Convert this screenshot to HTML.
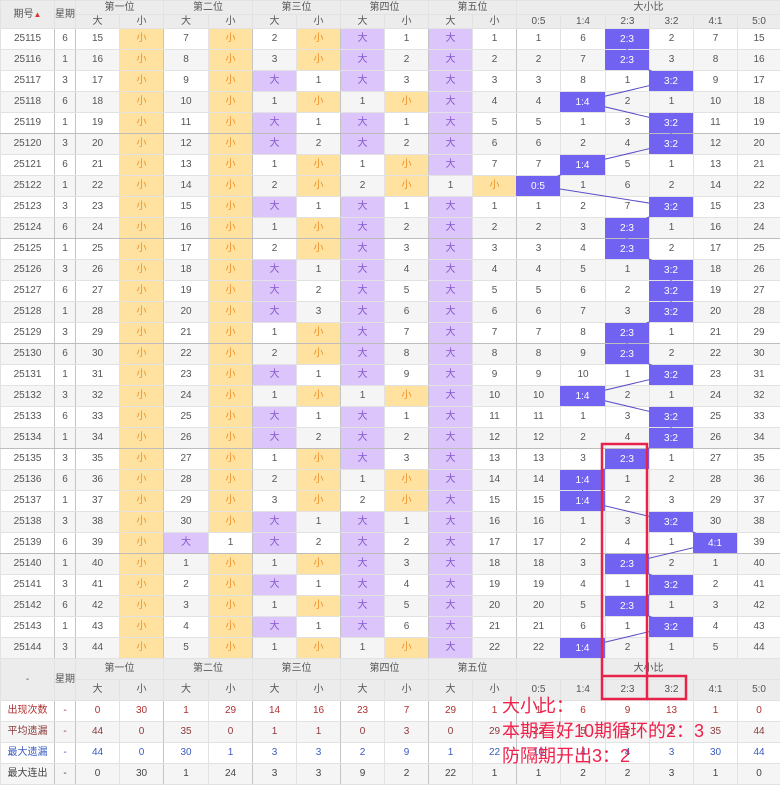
<!DOCTYPE html>
<html><head><meta charset="utf-8"><style>
body{margin:0;width:780px;height:785px;overflow:hidden;background:#fff;font-family:"Liberation Sans","Noto Sans CJK SC",sans-serif;position:relative}
table{border-collapse:collapse;table-layout:fixed;width:780px;position:absolute;left:0;font-size:10px;color:#555;line-height:12px}
td,th{border:1px solid #e2e2e2;text-align:center;padding:0;overflow:hidden;white-space:nowrap;font-weight:normal;line-height:12px;vertical-align:middle}
thead th,.fh th{background:#ececec;color:#555}
thead tr{height:14px}
thead th{height:13px}
tbody tr{height:21px}
tbody td{height:20px}
tbody tr:nth-child(even) td{background:#f5f5f5}
tbody td.s{background:#ffe29f!important;color:#f0902a}
tbody td.b{background:#dcc5fb!important;color:#8656d0}
tr.g td{border-bottom:1px solid #bdbdbd}
td:nth-child(1),td:nth-child(2),td:nth-child(4),td:nth-child(6),td:nth-child(8),td:nth-child(10),td:nth-child(12){border-right:1px solid #c4c4c4}
.f tr{height:21px}
.f td{height:20px}
.r1 td{color:#b03030}.r2 td{color:#8b3a3a}.r3 td{color:#3a5cc0}.r4 td{color:#444}
svg{position:absolute;left:0;top:0}
.note{position:absolute;left:502px;color:#f0204a;font-size:18px;font-family:"Liberation Sans","Noto Sans CJK SC",sans-serif;line-height:22px}
</style></head><body>
<table style="top:0">
<colgroup><col style="width:54px"><col style="width:21px"><col style="width:44px"><col style="width:44px"><col style="width:45px"><col style="width:44px"><col style="width:44px"><col style="width:44px"><col style="width:44px"><col style="width:44px"><col style="width:44px"><col style="width:44px"><col style="width:44px"><col style="width:45px"><col style="width:44px"><col style="width:44px"><col style="width:44px"><col style="width:43px"></colgroup>
<thead>
<tr><th rowspan="2">期号<span style="color:#d33;font-size:8px">▲</span></th><th rowspan="2">星期</th><th colspan="2">第一位</th><th colspan="2">第二位</th><th colspan="2">第三位</th><th colspan="2">第四位</th><th colspan="2">第五位</th><th colspan="6">大小比</th></tr>
<tr><th>大</th><th>小</th><th>大</th><th>小</th><th>大</th><th>小</th><th>大</th><th>小</th><th>大</th><th>小</th><th>0:5</th><th>1:4</th><th>2:3</th><th>3:2</th><th>4:1</th><th>5:0</th></tr>
</thead>
<tbody>
<tr><td>25115</td><td>6</td><td>15</td><td class="s">小</td><td>7</td><td class="s">小</td><td>2</td><td class="s">小</td><td class="b">大</td><td>1</td><td class="b">大</td><td>1</td><td>1</td><td>6</td><td></td><td>2</td><td>7</td><td>15</td></tr>
<tr><td>25116</td><td>1</td><td>16</td><td class="s">小</td><td>8</td><td class="s">小</td><td>3</td><td class="s">小</td><td class="b">大</td><td>2</td><td class="b">大</td><td>2</td><td>2</td><td>7</td><td></td><td>3</td><td>8</td><td>16</td></tr>
<tr><td>25117</td><td>3</td><td>17</td><td class="s">小</td><td>9</td><td class="s">小</td><td class="b">大</td><td>1</td><td class="b">大</td><td>3</td><td class="b">大</td><td>3</td><td>3</td><td>8</td><td>1</td><td></td><td>9</td><td>17</td></tr>
<tr><td>25118</td><td>6</td><td>18</td><td class="s">小</td><td>10</td><td class="s">小</td><td>1</td><td class="s">小</td><td>1</td><td class="s">小</td><td class="b">大</td><td>4</td><td>4</td><td></td><td>2</td><td>1</td><td>10</td><td>18</td></tr>
<tr class="g"><td>25119</td><td>1</td><td>19</td><td class="s">小</td><td>11</td><td class="s">小</td><td class="b">大</td><td>1</td><td class="b">大</td><td>1</td><td class="b">大</td><td>5</td><td>5</td><td>1</td><td>3</td><td></td><td>11</td><td>19</td></tr>
<tr><td>25120</td><td>3</td><td>20</td><td class="s">小</td><td>12</td><td class="s">小</td><td class="b">大</td><td>2</td><td class="b">大</td><td>2</td><td class="b">大</td><td>6</td><td>6</td><td>2</td><td>4</td><td></td><td>12</td><td>20</td></tr>
<tr><td>25121</td><td>6</td><td>21</td><td class="s">小</td><td>13</td><td class="s">小</td><td>1</td><td class="s">小</td><td>1</td><td class="s">小</td><td class="b">大</td><td>7</td><td>7</td><td></td><td>5</td><td>1</td><td>13</td><td>21</td></tr>
<tr><td>25122</td><td>1</td><td>22</td><td class="s">小</td><td>14</td><td class="s">小</td><td>2</td><td class="s">小</td><td>2</td><td class="s">小</td><td>1</td><td class="s">小</td><td></td><td>1</td><td>6</td><td>2</td><td>14</td><td>22</td></tr>
<tr><td>25123</td><td>3</td><td>23</td><td class="s">小</td><td>15</td><td class="s">小</td><td class="b">大</td><td>1</td><td class="b">大</td><td>1</td><td class="b">大</td><td>1</td><td>1</td><td>2</td><td>7</td><td></td><td>15</td><td>23</td></tr>
<tr class="g"><td>25124</td><td>6</td><td>24</td><td class="s">小</td><td>16</td><td class="s">小</td><td>1</td><td class="s">小</td><td class="b">大</td><td>2</td><td class="b">大</td><td>2</td><td>2</td><td>3</td><td></td><td>1</td><td>16</td><td>24</td></tr>
<tr><td>25125</td><td>1</td><td>25</td><td class="s">小</td><td>17</td><td class="s">小</td><td>2</td><td class="s">小</td><td class="b">大</td><td>3</td><td class="b">大</td><td>3</td><td>3</td><td>4</td><td></td><td>2</td><td>17</td><td>25</td></tr>
<tr><td>25126</td><td>3</td><td>26</td><td class="s">小</td><td>18</td><td class="s">小</td><td class="b">大</td><td>1</td><td class="b">大</td><td>4</td><td class="b">大</td><td>4</td><td>4</td><td>5</td><td>1</td><td></td><td>18</td><td>26</td></tr>
<tr><td>25127</td><td>6</td><td>27</td><td class="s">小</td><td>19</td><td class="s">小</td><td class="b">大</td><td>2</td><td class="b">大</td><td>5</td><td class="b">大</td><td>5</td><td>5</td><td>6</td><td>2</td><td></td><td>19</td><td>27</td></tr>
<tr><td>25128</td><td>1</td><td>28</td><td class="s">小</td><td>20</td><td class="s">小</td><td class="b">大</td><td>3</td><td class="b">大</td><td>6</td><td class="b">大</td><td>6</td><td>6</td><td>7</td><td>3</td><td></td><td>20</td><td>28</td></tr>
<tr class="g"><td>25129</td><td>3</td><td>29</td><td class="s">小</td><td>21</td><td class="s">小</td><td>1</td><td class="s">小</td><td class="b">大</td><td>7</td><td class="b">大</td><td>7</td><td>7</td><td>8</td><td></td><td>1</td><td>21</td><td>29</td></tr>
<tr><td>25130</td><td>6</td><td>30</td><td class="s">小</td><td>22</td><td class="s">小</td><td>2</td><td class="s">小</td><td class="b">大</td><td>8</td><td class="b">大</td><td>8</td><td>8</td><td>9</td><td></td><td>2</td><td>22</td><td>30</td></tr>
<tr><td>25131</td><td>1</td><td>31</td><td class="s">小</td><td>23</td><td class="s">小</td><td class="b">大</td><td>1</td><td class="b">大</td><td>9</td><td class="b">大</td><td>9</td><td>9</td><td>10</td><td>1</td><td></td><td>23</td><td>31</td></tr>
<tr><td>25132</td><td>3</td><td>32</td><td class="s">小</td><td>24</td><td class="s">小</td><td>1</td><td class="s">小</td><td>1</td><td class="s">小</td><td class="b">大</td><td>10</td><td>10</td><td></td><td>2</td><td>1</td><td>24</td><td>32</td></tr>
<tr><td>25133</td><td>6</td><td>33</td><td class="s">小</td><td>25</td><td class="s">小</td><td class="b">大</td><td>1</td><td class="b">大</td><td>1</td><td class="b">大</td><td>11</td><td>11</td><td>1</td><td>3</td><td></td><td>25</td><td>33</td></tr>
<tr class="g"><td>25134</td><td>1</td><td>34</td><td class="s">小</td><td>26</td><td class="s">小</td><td class="b">大</td><td>2</td><td class="b">大</td><td>2</td><td class="b">大</td><td>12</td><td>12</td><td>2</td><td>4</td><td></td><td>26</td><td>34</td></tr>
<tr><td>25135</td><td>3</td><td>35</td><td class="s">小</td><td>27</td><td class="s">小</td><td>1</td><td class="s">小</td><td class="b">大</td><td>3</td><td class="b">大</td><td>13</td><td>13</td><td>3</td><td></td><td>1</td><td>27</td><td>35</td></tr>
<tr><td>25136</td><td>6</td><td>36</td><td class="s">小</td><td>28</td><td class="s">小</td><td>2</td><td class="s">小</td><td>1</td><td class="s">小</td><td class="b">大</td><td>14</td><td>14</td><td></td><td>1</td><td>2</td><td>28</td><td>36</td></tr>
<tr><td>25137</td><td>1</td><td>37</td><td class="s">小</td><td>29</td><td class="s">小</td><td>3</td><td class="s">小</td><td>2</td><td class="s">小</td><td class="b">大</td><td>15</td><td>15</td><td></td><td>2</td><td>3</td><td>29</td><td>37</td></tr>
<tr><td>25138</td><td>3</td><td>38</td><td class="s">小</td><td>30</td><td class="s">小</td><td class="b">大</td><td>1</td><td class="b">大</td><td>1</td><td class="b">大</td><td>16</td><td>16</td><td>1</td><td>3</td><td></td><td>30</td><td>38</td></tr>
<tr class="g"><td>25139</td><td>6</td><td>39</td><td class="s">小</td><td class="b">大</td><td>1</td><td class="b">大</td><td>2</td><td class="b">大</td><td>2</td><td class="b">大</td><td>17</td><td>17</td><td>2</td><td>4</td><td>1</td><td></td><td>39</td></tr>
<tr><td>25140</td><td>1</td><td>40</td><td class="s">小</td><td>1</td><td class="s">小</td><td>1</td><td class="s">小</td><td class="b">大</td><td>3</td><td class="b">大</td><td>18</td><td>18</td><td>3</td><td></td><td>2</td><td>1</td><td>40</td></tr>
<tr><td>25141</td><td>3</td><td>41</td><td class="s">小</td><td>2</td><td class="s">小</td><td class="b">大</td><td>1</td><td class="b">大</td><td>4</td><td class="b">大</td><td>19</td><td>19</td><td>4</td><td>1</td><td></td><td>2</td><td>41</td></tr>
<tr><td>25142</td><td>6</td><td>42</td><td class="s">小</td><td>3</td><td class="s">小</td><td>1</td><td class="s">小</td><td class="b">大</td><td>5</td><td class="b">大</td><td>20</td><td>20</td><td>5</td><td></td><td>1</td><td>3</td><td>42</td></tr>
<tr><td>25143</td><td>1</td><td>43</td><td class="s">小</td><td>4</td><td class="s">小</td><td class="b">大</td><td>1</td><td class="b">大</td><td>6</td><td class="b">大</td><td>21</td><td>21</td><td>6</td><td>1</td><td></td><td>4</td><td>43</td></tr>
<tr class="g"><td>25144</td><td>3</td><td>44</td><td class="s">小</td><td>5</td><td class="s">小</td><td>1</td><td class="s">小</td><td>1</td><td class="s">小</td><td class="b">大</td><td>22</td><td>22</td><td></td><td>2</td><td>1</td><td>5</td><td>44</td></tr>
</tbody>
</table>

<table style="top:658px" class="f">
<colgroup><col style="width:54px"><col style="width:21px"><col style="width:44px"><col style="width:44px"><col style="width:45px"><col style="width:44px"><col style="width:44px"><col style="width:44px"><col style="width:44px"><col style="width:44px"><col style="width:44px"><col style="width:44px"><col style="width:44px"><col style="width:45px"><col style="width:44px"><col style="width:44px"><col style="width:44px"><col style="width:43px"></colgroup>
<tr class="fh"><th rowspan="2">-</th><th rowspan="2">星期</th><th colspan="2">第一位</th><th colspan="2">第二位</th><th colspan="2">第三位</th><th colspan="2">第四位</th><th colspan="2">第五位</th><th colspan="6">大小比</th></tr>
<tr class="fh"><th>大</th><th>小</th><th>大</th><th>小</th><th>大</th><th>小</th><th>大</th><th>小</th><th>大</th><th>小</th><th>0:5</th><th>1:4</th><th>2:3</th><th>3:2</th><th>4:1</th><th>5:0</th></tr>
<tr class="r1" style="background:#fff"><td>出现次数</td><td>-</td><td>0</td><td>30</td><td>1</td><td>29</td><td>14</td><td>16</td><td>23</td><td>7</td><td>29</td><td>1</td><td>1</td><td>6</td><td>9</td><td>13</td><td>1</td><td>0</td></tr>
<tr class="r2" style="background:#f5f5f5"><td>平均遗漏</td><td>-</td><td>44</td><td>0</td><td>35</td><td>0</td><td>1</td><td>1</td><td>0</td><td>3</td><td>0</td><td>29</td><td>22</td><td>5</td><td>2</td><td>1</td><td>35</td><td>44</td></tr>
<tr class="r3" style="background:#fff"><td>最大遗漏</td><td>-</td><td>44</td><td>0</td><td>30</td><td>1</td><td>3</td><td>3</td><td>2</td><td>9</td><td>1</td><td>22</td><td>10</td><td>4</td><td>4</td><td>3</td><td>30</td><td>44</td></tr>
<tr class="r4" style="background:#f5f5f5"><td>最大连出</td><td>-</td><td>0</td><td>30</td><td>1</td><td>24</td><td>3</td><td>3</td><td>9</td><td>2</td><td>22</td><td>1</td><td>1</td><td>2</td><td>2</td><td>3</td><td>1</td><td>0</td></tr>
</table>

<svg width="780" height="785" xmlns="http://www.w3.org/2000/svg" font-family="Liberation Sans, sans-serif" font-size="10">
<polyline fill="none" stroke="#5a4fc8" stroke-width="1" points="627,38.5 627,59.5 671,80.5 582.5,101.5 671,122.5 671,143.5 582.5,164.5 538,185.5 671,206.5 627,227.5 627,248.5 671,269.5 671,290.5 671,311.5 627,332.5 627,353.5 671,374.5 582.5,395.5 671,416.5 671,437.5 627,458.5 582.5,479.5 582.5,500.5 671,521.5 715,542.5 627,563.5 671,584.5 627,605.5 671,626.5 582.5,647.5"/>
<g fill="#7262f2">
<rect x="605" y="29" width="44" height="20"/><rect x="605" y="50" width="44" height="20"/><rect x="649" y="71" width="44" height="20"/><rect x="560" y="92" width="45" height="20"/><rect x="649" y="113" width="44" height="20"/><rect x="649" y="134" width="44" height="20"/><rect x="560" y="155" width="45" height="20"/><rect x="516" y="176" width="44" height="20"/><rect x="649" y="197" width="44" height="20"/><rect x="605" y="218" width="44" height="20"/><rect x="605" y="239" width="44" height="20"/><rect x="649" y="260" width="44" height="20"/><rect x="649" y="281" width="44" height="20"/><rect x="649" y="302" width="44" height="20"/><rect x="605" y="323" width="44" height="20"/><rect x="605" y="344" width="44" height="20"/><rect x="649" y="365" width="44" height="20"/><rect x="560" y="386" width="45" height="20"/><rect x="649" y="407" width="44" height="20"/><rect x="649" y="428" width="44" height="20"/><rect x="605" y="449" width="44" height="20"/><rect x="560" y="470" width="45" height="20"/><rect x="560" y="491" width="45" height="20"/><rect x="649" y="512" width="44" height="20"/><rect x="693" y="533" width="44" height="20"/><rect x="605" y="554" width="44" height="20"/><rect x="649" y="575" width="44" height="20"/><rect x="605" y="596" width="44" height="20"/><rect x="649" y="617" width="44" height="20"/><rect x="560" y="638" width="45" height="20"/>
</g>
<g fill="#fff" text-anchor="middle">
<text x="627" y="42">2:3</text><text x="627" y="63">2:3</text><text x="671" y="84">3:2</text><text x="582.5" y="105">1:4</text><text x="671" y="126">3:2</text><text x="671" y="147">3:2</text><text x="582.5" y="168">1:4</text><text x="538" y="189">0:5</text><text x="671" y="210">3:2</text><text x="627" y="231">2:3</text><text x="627" y="252">2:3</text><text x="671" y="273">3:2</text><text x="671" y="294">3:2</text><text x="671" y="315">3:2</text><text x="627" y="336">2:3</text><text x="627" y="357">2:3</text><text x="671" y="378">3:2</text><text x="582.5" y="399">1:4</text><text x="671" y="420">3:2</text><text x="671" y="441">3:2</text><text x="627" y="462">2:3</text><text x="582.5" y="483">1:4</text><text x="582.5" y="504">1:4</text><text x="671" y="525">3:2</text><text x="715" y="546">4:1</text><text x="627" y="567">2:3</text><text x="671" y="588">3:2</text><text x="627" y="609">2:3</text><text x="671" y="630">3:2</text><text x="582.5" y="651">1:4</text>
</g>
<g fill="none" stroke="#e8234a" stroke-width="2.5">
<path d="M602,699 V444 H647 V699 Z"/>
<path d="M602,676 H686 V699 H647"/>
</g>
</svg>
<div class="note" style="top:695px">大小比：</div>
<div class="note" style="top:720px">本期看好10期循环的2：3</div>
<div class="note" style="top:745px">防隔期开出3：2</div>
</body></html>
